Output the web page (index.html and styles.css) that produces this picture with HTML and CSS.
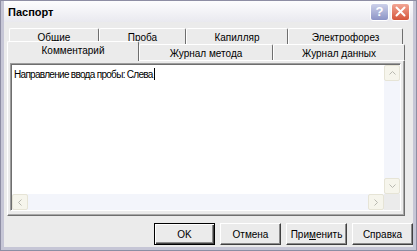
FILE: index.html
```html
<!DOCTYPE html>
<html lang="ru">
<head>
    <meta charset="UTF-8">
    <title>Паспорт</title>
    <link rel="stylesheet" href="styles.css">
</head>
<body>
    <div class="window">
        <div class="titlebar">
            <span class="title">Паспорт</span>
            <div class="caption-btns">
                <span class="cap help">?</span>
                <span class="cap close">
                    <svg width="11" height="11" viewBox="0 0 11 11"><path d="M1.5 1.5 L9.5 9.5 M9.5 1.5 L1.5 9.5" stroke="#fff" stroke-width="2" stroke-linecap="round"/></svg>
                </span>
            </div>
        </div>
        <div class="client">
            <div class="tab-row back">
                <div class="tab" style="width:90px">Общие</div>
                <div class="tab" style="width:87px">Проба</div>
                <div class="tab" style="width:102px">Капилляр</div>
                <div class="tab" style="width:115px">Электрофорез</div>
            </div>
            <div class="tab-row front">
                <div class="tab active" style="width:132px">Комментарий</div>
                <div class="tab" style="width:134px">Журнал метода</div>
                <div class="tab" style="width:132px">Журнал данных</div>
            </div>
            <div class="panel">
                <div class="editor">
                    <div class="edit-main">
                        <div class="text">Направление ввода пробы: Слева<span class="caret"></span></div>
                        <div class="vscroll">
                            <span class="sbtn">
                                <svg width="7" height="4" viewBox="0 0 7 4"><path d="M0.5 3.5 L3.5 0.5 L6.5 3.5" fill="none" stroke="#b8b8b0"/></svg>
                            </span>
                            <span class="strack"></span>
                            <span class="sbtn">
                                <svg width="7" height="4" viewBox="0 0 7 4"><path d="M0.5 0.5 L3.5 3.5 L6.5 0.5" fill="none" stroke="#b8b8b0"/></svg>
                            </span>
                        </div>
                    </div>
                    <div class="edit-bottom">
                        <div class="hscroll">
                            <span class="sbtn">
                                <svg width="4" height="7" viewBox="0 0 4 7"><path d="M3.5 0.5 L0.5 3.5 L3.5 6.5" fill="none" stroke="#b8b8b0"/></svg>
                            </span>
                            <span class="strack"></span>
                            <span class="sbtn">
                                <svg width="4" height="7" viewBox="0 0 4 7"><path d="M0.5 0.5 L3.5 3.5 L0.5 6.5" fill="none" stroke="#b8b8b0"/></svg>
                            </span>
                        </div>
                        <div class="corner"></div>
                    </div>
                </div>
            </div>
            <div class="buttons">
                <button class="btn default">OK</button>
                <button class="btn">Отмена</button>
                <button class="btn">При<u>м</u>енить</button>
                <button class="btn">Справка</button>
            </div>
        </div>
    </div>
</body>
</html>
```

FILE: styles.css
```css
* { box-sizing: border-box; }
body { margin: 0; background: #fff; font-family: "Liberation Sans", Arial, sans-serif; font-size: 10px; color: #000; }

.window { width: 417px; height: 251px; background: #ebebeb; border: 1px solid #8e8ea4; display: flex; flex-direction: column; }
.titlebar { height: 21px; display: flex; align-items: center; justify-content: space-between; padding: 0 3px 0 4px; background: linear-gradient(#fdfdfe, #e9e9ef); border-left: 3px solid #c6c6d6; border-right: 3px solid #c6c6d6; }
.title { font-weight: bold; font-size: 11px; padding-top: 1px; }
.caption-btns { display: flex; gap: 2px; }
.cap { width: 19px; height: 18px; border-radius: 3px; display: flex; align-items: center; justify-content: center; border: 1px solid #fff; }
.help { background: linear-gradient(#cdd1ea, #8c94c6); color: #fff; font-weight: bold; font-size: 13px; }
.close { background: linear-gradient(#f2a594, #d5553a); }

.client { flex: 1; display: flex; flex-direction: column; border-left: 3px solid #c6c6d6; border-right: 3px solid #c6c6d6; border-bottom: 3px solid #c6c6d6; padding: 6px 8px 0 3px; }

.tab-row { display: flex; }
.tab-row.back { height: 16px; padding-left: 2px; }
.tab-row.front { height: 19px; margin-top: -3px; align-items: flex-end; position: relative; z-index: 1; }
.tab { flex: none; height: 16px; display: flex; align-items: center; justify-content: center; padding-top: 1px; background: #ebebeb; border-top: 1px solid #fff; border-left: 1px solid #fff; border-right: 1px solid #6e6e6e; border-radius: 2px 2px 0 0; }
.tab.active { height: 20px; margin-bottom: -1px; padding-bottom: 3px; }

.panel { height: 156px; border-top: 1px solid #fff; border-left: 1px solid #fff; border-right: 1px solid #6e6e6e; border-bottom: 1px solid #6e6e6e; box-shadow: inset -1px -1px #a8a8a8; padding: 2px 3px 4px 2px; }
.editor { height: 100%; border: 1px solid #9c9c9c; border-right-color: #fff; border-bottom-color: #fff; box-shadow: inset 1px 1px #6e6e6e; background: #fff; display: flex; flex-direction: column; padding: 1px 0 0 1px; }
.edit-main { flex: 1; display: flex; }
.text { flex: 1; padding: 3px 1px 3px 2px; letter-spacing: -0.7px; }
.caret { display: inline-block; width: 1px; height: 12px; margin-left: 1px; background: #000; vertical-align: -2px; }

.vscroll { width: 16px; display: flex; flex-direction: column; background: #f3f5fb; }
.hscroll { flex: 1; height: 16px; display: flex; background: #f3f5fb; }
.strack { flex: 1; }
.sbtn { width: 16px; height: 16px; display: flex; align-items: center; justify-content: center; background: #f6f5ec; border: 1px solid #e6e4d6; border-radius: 2px; }
.edit-bottom { display: flex; }
.corner { width: 16px; height: 16px; background: #ebebeb; }

.buttons { display: flex; justify-content: flex-end; gap: 5px; margin-top: 7px; margin-right: -8px; }
.btn { width: 61px; height: 22px; font-family: "Liberation Sans", Arial, sans-serif; font-size: 10px; background: #ebebeb; border: 1px solid; border-color: #fff #404040 #404040 #fff; box-shadow: inset -1px -1px #8a8a8a; padding: 0; color: #000; }
.btn.default { border: 1px solid #000; box-shadow: inset 1px 1px #fff, inset -1px -1px #404040, inset -2px -2px #8a8a8a; }
```
